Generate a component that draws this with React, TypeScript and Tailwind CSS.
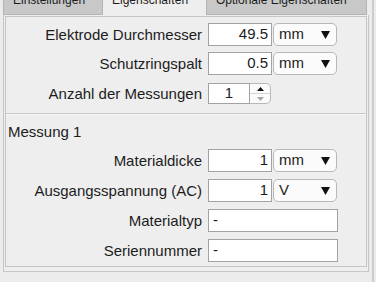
import React from "react";

const font = { fontFamily: '"Liberation Sans", Arial, sans-serif' };

const Caret = () => (
  <svg width="9" height="8" viewBox="0 0 9 8">
    <path d="M0 0H9L4.5 8Z" fill="#111" />
  </svg>
);

const NumField = ({ value }: { value: string }) => (
  <div className="w-[64px] h-[23px] bg-white border border-[#a2a2a2] flex items-center justify-end pr-[3px] text-[15px] text-[#1c1c1c]">
    {value}
  </div>
);

const UnitSelect = ({ unit }: { unit: string }) => (
  <div className="ml-[1px] w-[64px] h-[23px] rounded-[5px] border border-[#b8b8b8] bg-[#fbfbfb] flex items-center justify-between pl-[5px] pr-[6px] text-[15px] text-[#1c1c1c]">
    <span>{unit}</span>
    <Caret />
  </div>
);

const TextField = ({ value }: { value: string }) => (
  <div className="w-[130px] h-[23px] bg-white border border-[#a2a2a2] flex items-center pl-[4px] text-[15px] text-[#1c1c1c]">
    {value}
  </div>
);

const Spinner = ({ value }: { value: string }) => (
  <div className="flex h-[21px]">
    <div className="w-[42px] h-full bg-white border border-[#a2a2a2] flex items-center justify-center text-[15px] text-[#1c1c1c]">
      {value}
    </div>
    <div className="w-[21px] h-full rounded-r-[5px] border border-l-0 border-[#b8b8b8] bg-[#fbfbfb] flex flex-col">
      <div className="flex-1 flex items-center justify-center border-b border-[#d4d4d4]">
        <svg width="7" height="4" viewBox="0 0 7 4">
          <path d="M0 4H7L3.5 0Z" fill="#111" />
        </svg>
      </div>
      <div className="flex-1 flex items-center justify-center">
        <svg width="7" height="4" viewBox="0 0 7 4">
          <path d="M0 0H7L3.5 4Z" fill="#a8a8a8" />
        </svg>
      </div>
    </div>
  </div>
);

const Row = ({ label, children }: { label: string; children: React.ReactNode }) => (
  <div className="flex items-center h-[23px]">
    <div className="w-[196px] text-right text-[15px] text-[#1c1c1c] leading-[17px] whitespace-nowrap">{label}</div>
    <div className="ml-[6px] flex items-center">{children}</div>
  </div>
);

const tabs = [
  { name: "Einstellungen", w: "w-[100px]", active: false },
  { name: "Eigenschaften", w: "w-[104px]", active: true },
  { name: "Optionale Eigenschaften", w: "w-[160px]", active: false },
];

export default function App() {
  return (
    <div className="w-[376px] h-[282px] overflow-hidden bg-[#ececec] flex" style={font}>
      <div className="w-[372px] flex flex-col">
        {/* Tabs */}
        <div className="flex h-[15px] ml-[3px]">
          {tabs.map((t) => (
            <div
              key={t.name}
              className={`${t.w} h-full overflow-hidden pl-[9px] border-r border-[#b4b4b4] ${
                t.active ? "bg-[#eeeeee]" : "bg-[#c8c8c8] border-b"
              } ${t.name === "Einstellungen" ? "border-l" : ""}`}
            >
              <div className="-mt-[7px] text-[12px] leading-[14px] text-[#1c1c1c] whitespace-nowrap">{t.name}</div>
            </div>
          ))}
        </div>

        {/* Tab body */}
        <div className="ml-[3px] w-[366px] h-[257px] border-l border-r border-b border-[#c6c6c6] pt-[1px] pl-[1px] bg-[#eeeeee]">
          <div className="w-[362px] border border-[#c6c6c6]">
            <div className="pt-[6px] pb-[8px]">
              <Row label="Elektrode Durchmesser">
                <NumField value="49.5" />
                <UnitSelect unit="mm" />
              </Row>
              <div className="mt-[6px]">
                <Row label="Schutzringspalt">
                  <NumField value="0.5" />
                  <UnitSelect unit="mm" />
                </Row>
              </div>
              <div className="mt-[7px]">
                <Row label="Anzahl der Messungen">
                  <Spinner value="1" />
                </Row>
              </div>
            </div>

            <div className="h-[2px] border-t border-[#c9c9c9] bg-[#f7f7f7]" />

            <div className="pb-[4px]">
              <div className="mt-[8px] h-[17px] leading-[17px] pl-[2px] text-[15px] text-[#1c1c1c]">Messung 1</div>
              <div className="mt-[9px] flex flex-col gap-[7px]">
                <Row label="Materialdicke">
                  <NumField value="1" />
                  <UnitSelect unit="mm" />
                </Row>
                <Row label="Ausgangsspannung (AC)">
                  <NumField value="1" />
                  <UnitSelect unit="V" />
                </Row>
                <Row label="Materialtyp">
                  <TextField value="-" />
                </Row>
                <Row label="Seriennummer">
                  <TextField value="-" />
                </Row>
              </div>
            </div>
          </div>
        </div>
      </div>
      <div className="w-[2px] h-full bg-[#cdcdcd]" />
      <div className="flex-1 h-full bg-[#ececec]" />
    </div>
  );
}
